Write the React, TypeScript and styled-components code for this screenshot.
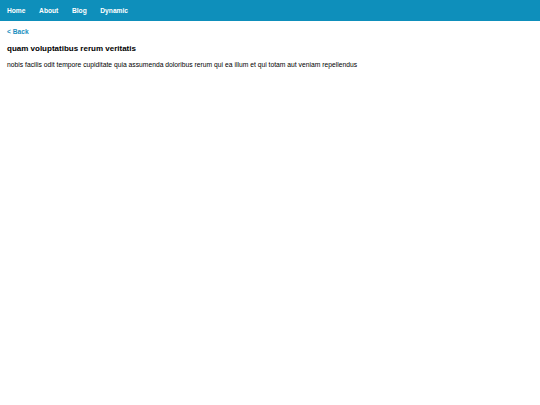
import React from "react";
import styled, { createGlobalStyle } from "styled-components";

const Global = createGlobalStyle`
  html, body { margin: 0; padding: 0; background: #fff; }
  body { font-family: "Liberation Sans", Arial, sans-serif; color: #000; }
`;

const Header = styled.nav`
  height: 21px;
  background: #0e8fbb;
  display: flex;
  align-items: center;
  padding-left: 7px;
  gap: 13.6px;
`;

const NavLink = styled.a`
  color: #fff;
  font-weight: bold;
  font-size: 6.67px;
  text-decoration: none;
`;

const Main = styled.main`
  padding: 7px 7px;
`;

const Back = styled.a`
  display: block;
  color: #1a8fc0;
  font-weight: bold;
  font-size: 6.67px;
  text-decoration: none;
  line-height: 8px;
`;

const Title = styled.h1`
  font-size: 8px;
  font-weight: bold;
  margin: 8px 0 0;
  line-height: 10px;
`;

const Body = styled.p`
  font-size: 6.75px;
  margin: 7px 0 0;
  line-height: 8px;
`;

export default function App() {
  return (
    <>
      <Global />
      <Header>
        <NavLink href="#">Home</NavLink>
        <NavLink href="#">About</NavLink>
        <NavLink href="#">Blog</NavLink>
        <NavLink href="#">Dynamic</NavLink>
      </Header>
      <Main>
        <Back href="#">&lt; Back</Back>
        <Title>quam voluptatibus rerum veritatis</Title>
        <Body>
          nobis facilis odit tempore cupiditate quia assumenda doloribus rerum qui ea illum et qui totam aut veniam repellendus
        </Body>
      </Main>
    </>
  );
}
